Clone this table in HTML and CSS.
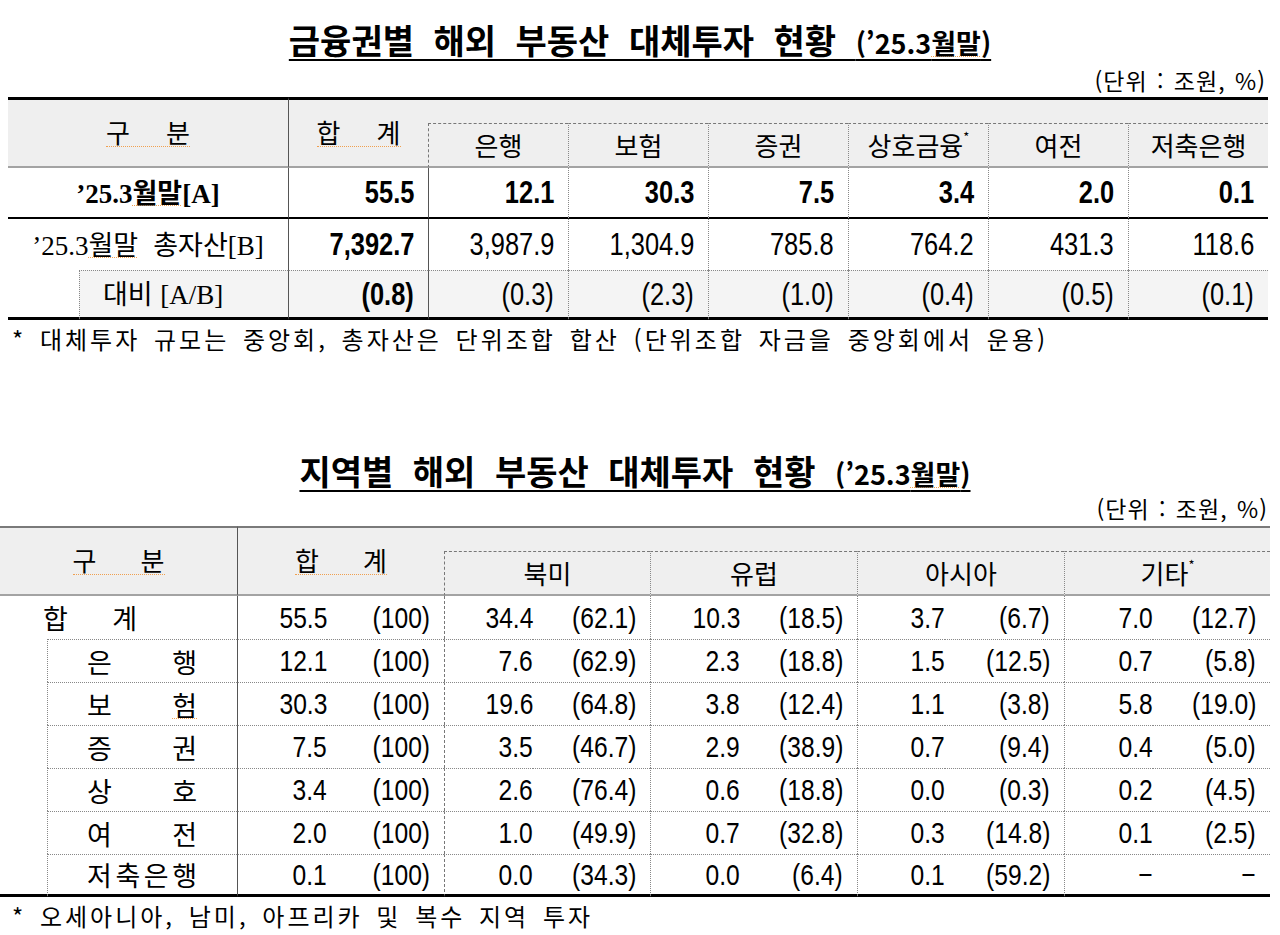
FILE: index.html
```html
<!DOCTYPE html>
<html lang="ko">
<head>
<meta charset="utf-8">
<title>해외 부동산 대체투자 현황</title>
<link rel="stylesheet" href="styles.css">
</head>
<body>
<main class="page">
  <section class="block sec1">
    <h1 class="title title1"><span class="u">금융권별 해외 부동산 대체투자 현황 <span class="tsub">(’25.3<span class="sp">월말</span>)</span></span></h1>
    <div class="unit unit1">(단위 : 조원, %)</div>
    <table class="tbl ta">
      <colgroup>
        <col class="ca0"><col class="ca1"><col class="ca2">
        <col class="ca3"><col class="ca3"><col class="ca3"><col class="ca3"><col class="ca3"><col class="ca3">
      </colgroup>
      <thead>
        <tr class="ha">
          <th class="hg top" colspan="2" rowspan="2"><span class="dist w84 spb"><span>구</span><span>분</span></span></th>
          <th class="hs top sumcol" rowspan="2"><span class="dist w84 spb"><span>합</span><span>계</span></span></th>
          <th class="gap top" colspan="6"></th>
        </tr>
        <tr class="hb">
          <th class="sub dl">은행</th>
          <th class="sub ol">보험</th>
          <th class="sub ol">증권</th>
          <th class="sub ol">상호금융<sup>*</sup></th>
          <th class="sub ol">여전</th>
          <th class="sub ol">저축은행</th>
        </tr>
      </thead>
      <tbody>
        <tr class="r1">
          <td class="lbl bold" colspan="2"><span class="lat">’25.3</span><span class="sp">월말</span><span class="lat">[A]</span></td>
          <td class="n bold sumcol"><span class="nx">55.5</span></td>
          <td class="n bold sl"><span class="nx">12.1</span></td>
          <td class="n bold ol"><span class="nx">30.3</span></td>
          <td class="n bold ol"><span class="nx">7.5</span></td>
          <td class="n bold ol"><span class="nx">3.4</span></td>
          <td class="n bold ol"><span class="nx">2.0</span></td>
          <td class="n bold ol"><span class="nx">0.1</span></td>
        </tr>
        <tr class="r2">
          <td class="lbl" colspan="2"><span class="lat">’25.3</span><span class="sp">월말</span>&nbsp; 총자산<span class="lat">[B]</span></td>
          <td class="n bold sumcol"><span class="nx">7,392.7</span></td>
          <td class="n sl"><span class="nx">3,987.9</span></td>
          <td class="n ol"><span class="nx">1,304.9</span></td>
          <td class="n ol"><span class="nx">785.8</span></td>
          <td class="n ol"><span class="nx">764.2</span></td>
          <td class="n ol"><span class="nx">431.3</span></td>
          <td class="n ol"><span class="nx">118.6</span></td>
        </tr>
        <tr class="r3">
          <td class="blank"></td>
          <td class="lbl3 ol">대비 <span class="lat">[A/B]</span></td>
          <td class="n bold sumcol"><span class="nx">(0.8)</span></td>
          <td class="n sl"><span class="nx">(0.3)</span></td>
          <td class="n ol"><span class="nx">(2.3)</span></td>
          <td class="n ol"><span class="nx">(1.0)</span></td>
          <td class="n ol"><span class="nx">(0.4)</span></td>
          <td class="n ol"><span class="nx">(0.5)</span></td>
          <td class="n ol"><span class="nx">(0.1)</span></td>
        </tr>
      </tbody>
    </table>
    <p class="note note1">* 대체투자 규모는 중앙회, 총자산은 단위조합 합산 (단위조합 자금을 중앙회에서 운용)</p>
  </section>

  <section class="block sec2">
    <h1 class="title title2"><span class="u">지역별 해외 부동산 대체투자 현황 <span class="tsub">(’25.3<span class="sp">월말</span>)</span></span></h1>
    <div class="unit unit2">(단위 : 조원, %)</div>
    <table class="tbl tb">
      <colgroup>
        <col class="cb0"><col class="cb1">
        <col class="s90"><col class="s117">
        <col class="s89"><col class="s117">
        <col class="s90"><col class="s117">
        <col class="s88"><col class="s119">
        <col class="s89"><col class="s117">
      </colgroup>
      <thead>
        <tr class="ha">
          <th class="hg top" colspan="2" rowspan="2"><span class="dist w92 spb"><span>구</span><span>분</span></span></th>
          <th class="hs top sumcol" colspan="2" rowspan="2"><span class="dist w92 spb"><span>합</span><span>계</span></span></th>
          <th class="gap top" colspan="8"></th>
        </tr>
        <tr class="hb">
          <th class="sub dl" colspan="2">북미</th>
          <th class="sub ol" colspan="2">유럽</th>
          <th class="sub ol" colspan="2">아시아</th>
          <th class="sub ol" colspan="2">기타<sup>*</sup></th>
        </tr>
      </thead>
      <tbody>
        <tr class="rt">
          <td class="tot" colspan="2"><span class="dist w94"><span>합</span><span>계</span></span></td>
          <td class="v1 sumcol"><span class="nx">55.5</span></td><td class="v2"><span class="nx">(100)</span></td>
          <td class="v1 dl"><span class="nx">34.4</span></td><td class="v2"><span class="nx">(62.1)</span></td>
          <td class="v1 ol"><span class="nx">10.3</span></td><td class="v2"><span class="nx">(18.5)</span></td>
          <td class="v1 ol"><span class="nx">3.7</span></td><td class="v2"><span class="nx">(6.7)</span></td>
          <td class="v1 ol"><span class="nx">7.0</span></td><td class="v2"><span class="nx">(12.7)</span></td>
        </tr>
        <tr class="rs">
          <td class="blank" rowspan="6"></td>
          <td class="sl2 ol"><span class="dist w110"><span>은</span><span>행</span></span></td>
          <td class="v1 sumcol"><span class="nx">12.1</span></td><td class="v2"><span class="nx">(100)</span></td>
          <td class="v1 dl"><span class="nx">7.6</span></td><td class="v2"><span class="nx">(62.9)</span></td>
          <td class="v1 ol"><span class="nx">2.3</span></td><td class="v2"><span class="nx">(18.8)</span></td>
          <td class="v1 ol"><span class="nx">1.5</span></td><td class="v2"><span class="nx">(12.5)</span></td>
          <td class="v1 ol"><span class="nx">0.7</span></td><td class="v2"><span class="nx">(5.8)</span></td>
        </tr>
        <tr class="rs">
          <td class="sl2 ol"><span class="dist w110"><span>보</span><span class="sp">험</span></span></td>
          <td class="v1 sumcol"><span class="nx">30.3</span></td><td class="v2"><span class="nx">(100)</span></td>
          <td class="v1 dl"><span class="nx">19.6</span></td><td class="v2"><span class="nx">(64.8)</span></td>
          <td class="v1 ol"><span class="nx">3.8</span></td><td class="v2"><span class="nx">(12.4)</span></td>
          <td class="v1 ol"><span class="nx">1.1</span></td><td class="v2"><span class="nx">(3.8)</span></td>
          <td class="v1 ol"><span class="nx">5.8</span></td><td class="v2"><span class="nx">(19.0)</span></td>
        </tr>
        <tr class="rs">
          <td class="sl2 ol"><span class="dist w110"><span>증</span><span>권</span></span></td>
          <td class="v1 sumcol"><span class="nx">7.5</span></td><td class="v2"><span class="nx">(100)</span></td>
          <td class="v1 dl"><span class="nx">3.5</span></td><td class="v2"><span class="nx">(46.7)</span></td>
          <td class="v1 ol"><span class="nx">2.9</span></td><td class="v2"><span class="nx">(38.9)</span></td>
          <td class="v1 ol"><span class="nx">0.7</span></td><td class="v2"><span class="nx">(9.4)</span></td>
          <td class="v1 ol"><span class="nx">0.4</span></td><td class="v2"><span class="nx">(5.0)</span></td>
        </tr>
        <tr class="rs">
          <td class="sl2 ol"><span class="dist w110"><span>상</span><span>호</span></span></td>
          <td class="v1 sumcol"><span class="nx">3.4</span></td><td class="v2"><span class="nx">(100)</span></td>
          <td class="v1 dl"><span class="nx">2.6</span></td><td class="v2"><span class="nx">(76.4)</span></td>
          <td class="v1 ol"><span class="nx">0.6</span></td><td class="v2"><span class="nx">(18.8)</span></td>
          <td class="v1 ol"><span class="nx">0.0</span></td><td class="v2"><span class="nx">(0.3)</span></td>
          <td class="v1 ol"><span class="nx">0.2</span></td><td class="v2"><span class="nx">(4.5)</span></td>
        </tr>
        <tr class="rs">
          <td class="sl2 ol"><span class="dist w110"><span>여</span><span>전</span></span></td>
          <td class="v1 sumcol"><span class="nx">2.0</span></td><td class="v2"><span class="nx">(100)</span></td>
          <td class="v1 dl"><span class="nx">1.0</span></td><td class="v2"><span class="nx">(49.9)</span></td>
          <td class="v1 ol"><span class="nx">0.7</span></td><td class="v2"><span class="nx">(32.8)</span></td>
          <td class="v1 ol"><span class="nx">0.3</span></td><td class="v2"><span class="nx">(14.8)</span></td>
          <td class="v1 ol"><span class="nx">0.1</span></td><td class="v2"><span class="nx">(2.5)</span></td>
        </tr>
        <tr class="rs last">
          <td class="sl2 ol"><span class="dist w110"><span>저</span><span>축</span><span>은</span><span>행</span></span></td>
          <td class="v1 sumcol"><span class="nx">0.1</span></td><td class="v2"><span class="nx">(100)</span></td>
          <td class="v1 dl"><span class="nx">0.0</span></td><td class="v2"><span class="nx">(34.3)</span></td>
          <td class="v1 ol"><span class="nx">0.0</span></td><td class="v2"><span class="nx">(6.4)</span></td>
          <td class="v1 ol"><span class="nx">0.1</span></td><td class="v2"><span class="nx">(59.2)</span></td>
          <td class="v1 ol"><span class="nx">−</span></td><td class="v2"><span class="nx">−</span></td>
        </tr>
      </tbody>
    </table>
    <p class="note note2">* 오세아니아, 남미, 아프리카 및 복수 지역 투자</p>
  </section>
</main>
</body>
</html>
```

FILE: styles.css
```css
html, body {
  margin: 0;
  padding: 0;
  background: #ffffff;
  color: #000000;
}
body {
  font-family: "Noto Sans CJK KR", "Noto Sans", sans-serif;
}
.page {
  width: 1280px;
  height: 935px;
  overflow: hidden;
}

/* titles */
.title {
  margin: 0;
  text-align: center;
  font-size: 34px;
  font-weight: 700;
  line-height: 1;
}
.title .u {
  text-decoration: underline;
  text-decoration-thickness: 2px;
  text-underline-offset: 5px;
  word-spacing: 10px;
}
.title .tsub {
  font-size: 27px;
  word-spacing: 0;
}
.title1 { padding-top: 23px; }
.title2 { padding-top: 2px; padding-right: 10px; }

.sp {
  text-decoration: underline dotted #f0a050;
  text-decoration-thickness: 1px;
  text-underline-offset: 2px;
}
.spb {
  border-bottom: 1px dotted #f0a050;
  padding-bottom: 1px;
}

.unit {
  text-align: right;
  font-size: 23px;
  line-height: 1;
  letter-spacing: 1px;
  word-spacing: 2px;
  padding-right: 14px;
}
.unit1 { margin-top: 12px; }
.unit2 { margin-top: 9px; padding-right: 12px; }

/* tables */
.tbl {
  table-layout: fixed;
  border-collapse: separate;
  border-spacing: 0;
}
.tbl th, .tbl td {
  padding: 0;
  vertical-align: middle;
  font-weight: 400;
}
.ta {
  width: 1260px;
  margin-top: 5px;
  margin-left: 8px;
}
.ca0 { width: 71px; }
.ca1 { width: 209px; }
.ca2 { width: 140px; }
.ca3 { width: 140px; }

.tb {
  width: 1270px;
  margin-top: 6px;
  margin-left: 0;
}
.cb0 { width: 47px; }
.cb1 { width: 190px; }
.s88 { width: 88px; }
.s89 { width: 89px; }
.s90 { width: 90px; }
.s117 { width: 117px; }
.s119 { width: 119px; }

/* header */
.tbl thead th {
  background: #efefef;
  font-size: 26px;
  line-height: 1;
}
.ta .top { border-top: 3px solid #000; }
.tb .top { border-top: 2px solid #7a7a7a; }
.hg, .hs {
  border-bottom: 2px solid #a3a3a3;
  text-align: center;
}
.ta .ha { height: 26px; }
.ta .hb { height: 45px; }
.tb .ha { height: 25px; }
.tb .hb { height: 45px; }
.sub {
  border-top: 1px dashed #777;
  border-bottom: 2px solid #a3a3a3;
  text-align: center;
  padding-top: 2px;
}
.sub sup {
  font-size: 13px;
  vertical-align: top;
  position: relative;
  top: -2px;
}

.dist {
  display: inline-flex;
  justify-content: space-between;
  line-height: 1;
}
.w84 { width: 84px; }
.w92 { width: 92px; }
.w94 { width: 94px; }
.w110 { width: 110px; }

/* vertical rules */
.sumcol { border-left: 1px solid #555; }
.sl { border-left: 1px solid #555; }
.dl { border-left: 1px dashed #777; }
.ol { border-left: 1px dotted #888; }

/* table A body */
.lat { font-family: "Liberation Serif", serif; }
.lbl {
  text-align: center;
  font-size: 27px;
  line-height: 1;
}
.bold { font-weight: 700 !important; }
.nx {
  display: inline-block;
  transform: scaleX(0.82);
  transform-origin: 100% 50%;
}
.n {
  font-family: "Liberation Sans", Arial, sans-serif;
  font-size: 31px;
  line-height: 1;
  text-align: right;
  padding-right: 14px !important;
}
.ta .r1 { height: 51px; }
.ta .r2 { height: 51px; }
.ta .r3 { height: 50px; }
.r1 td { border-bottom: 2px solid #000; }
.r3 td {
  border-bottom: 3px solid #000;
}
.r3 td:not(.blank) {
  border-top: 1px dotted #888;
  background: #f4f4f4;
}
.lbl3 {
  font-size: 27px;
  line-height: 1;
  text-align: left;
  padding-left: 23px !important;
}

/* table B body */
.tb tbody tr { height: 43px; }
.tot {
  text-align: left;
  padding-left: 43px !important;
  font-size: 27px;
  line-height: 1;
}
.sl2 {
  font-size: 27px;
  line-height: 1;
  padding-left: 39px !important;
}
.rs td:not(.blank) { border-top: 1px dotted #888; }
.last td, .blank { border-bottom: 3px solid #000; }
.v1, .v2 {
  font-family: "Liberation Sans", Arial, sans-serif;
  font-size: 30px;
  line-height: 1;
  text-align: right;
}
.v2 { padding-right: 14px !important; }

/* notes */
.note {
  margin: 0;
  font-size: 24px;
  line-height: 1;
  letter-spacing: 3px;
  word-spacing: 4px;
  padding-left: 12px;
}
.note1 { margin-top: 7px; }
.note2 { margin-top: 7px; }
.sec2 { margin-top: 101px; }
```
